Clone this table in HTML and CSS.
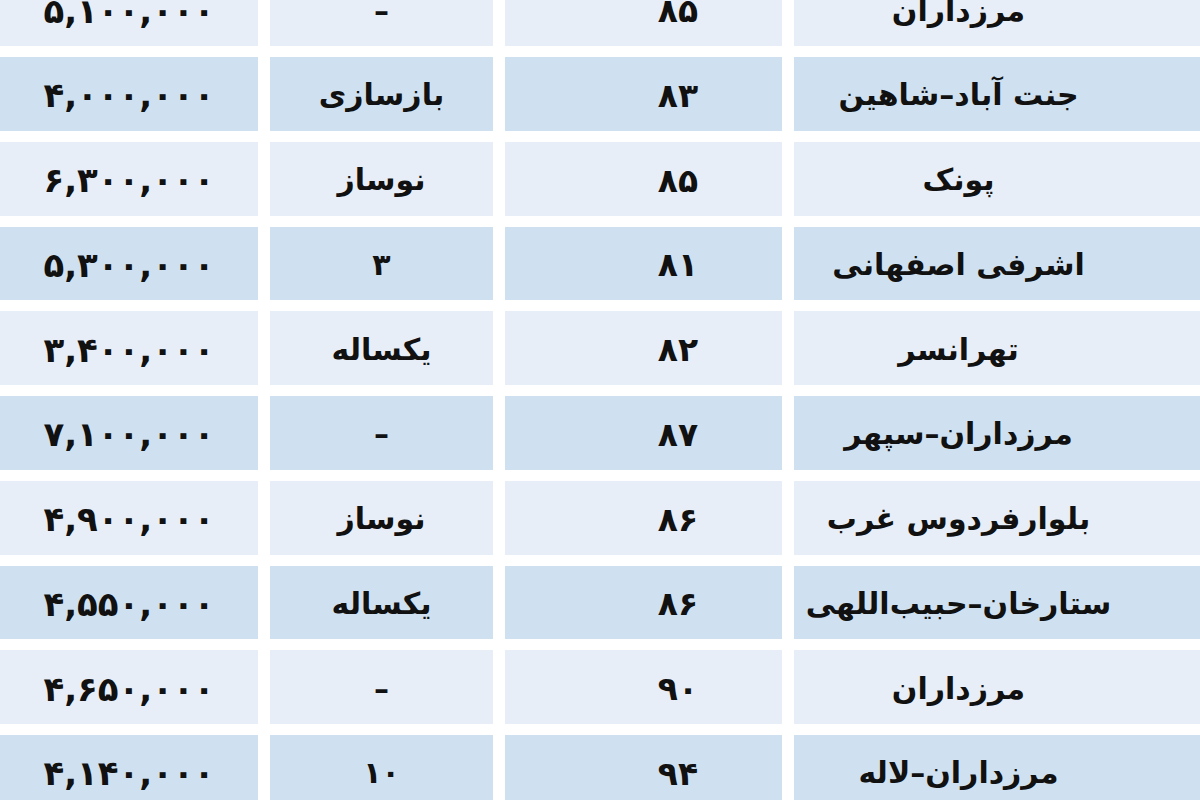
FILE: index.html
```html
<!DOCTYPE html>
<html lang="fa">
<head>
<meta charset="utf-8">
<title>جدول قیمت</title>
<link rel="stylesheet" href="styles.css">
</head>
<body>
<div class="table" dir="rtl">
  <div class="row light"><div class="cell loc">مرزداران</div><div class="cell age">۸۵</div><div class="cell kind">–</div><div class="cell price">۵,۱۰۰,۰۰۰</div></div>
  <div class="row blue"><div class="cell loc">جنت آباد–شاهین</div><div class="cell age">۸۳</div><div class="cell kind">بازسازی</div><div class="cell price">۴,۰۰۰,۰۰۰</div></div>
  <div class="row light"><div class="cell loc">پونک</div><div class="cell age">۸۵</div><div class="cell kind">نوساز</div><div class="cell price">۶,۳۰۰,۰۰۰</div></div>
  <div class="row blue"><div class="cell loc">اشرفی اصفهانی</div><div class="cell age">۸۱</div><div class="cell kind">۳</div><div class="cell price">۵,۳۰۰,۰۰۰</div></div>
  <div class="row light"><div class="cell loc">تهرانسر</div><div class="cell age">۸۲</div><div class="cell kind">یکساله</div><div class="cell price">۳,۴۰۰,۰۰۰</div></div>
  <div class="row blue"><div class="cell loc">مرزداران–سپهر</div><div class="cell age">۸۷</div><div class="cell kind">–</div><div class="cell price">۷,۱۰۰,۰۰۰</div></div>
  <div class="row light"><div class="cell loc">بلوارفردوس غرب</div><div class="cell age">۸۶</div><div class="cell kind">نوساز</div><div class="cell price">۴,۹۰۰,۰۰۰</div></div>
  <div class="row blue"><div class="cell loc">ستارخان–حبیب‌اللهی</div><div class="cell age">۸۶</div><div class="cell kind">یکساله</div><div class="cell price">۴,۵۵۰,۰۰۰</div></div>
  <div class="row light"><div class="cell loc">مرزداران</div><div class="cell age">۹۰</div><div class="cell kind">–</div><div class="cell price">۴,۶۵۰,۰۰۰</div></div>
  <div class="row blue"><div class="cell loc">مرزداران–لاله</div><div class="cell age">۹۴</div><div class="cell kind">۱۰</div><div class="cell price">۴,۱۴۰,۰۰۰</div></div>
</div>
</body>
</html>
```
FILE: styles.css
```css
html, body {
  margin: 0;
  padding: 0;
  background: #ffffff;
  overflow: hidden;
}
body {
  width: 1200px;
  height: 800px;
  font-family: "DejaVu Sans", "Noto Sans", sans-serif;
  font-weight: bold;
  color: #111111;
}
.table {
  display: flex;
  flex-direction: column;
  gap: 11px;
  margin-top: -27.75px;
}
.row {
  display: grid;
  grid-template-columns: 1fr 277px 223px 258px;
  column-gap: 12px;
  height: 73.75px;
}
.cell {
  display: flex;
  align-items: center;
  justify-content: center;
  font-size: 30px;
  line-height: 1;
  padding-top: 3px;
}
.light .cell { background: #e8eef7; }
.blue .cell { background: #cfe1f1; }
.loc { padding-right: 77px; }
.age { padding-left: 69px; font-size: 33px; }
.price { font-size: 34px; direction: ltr; }
```
